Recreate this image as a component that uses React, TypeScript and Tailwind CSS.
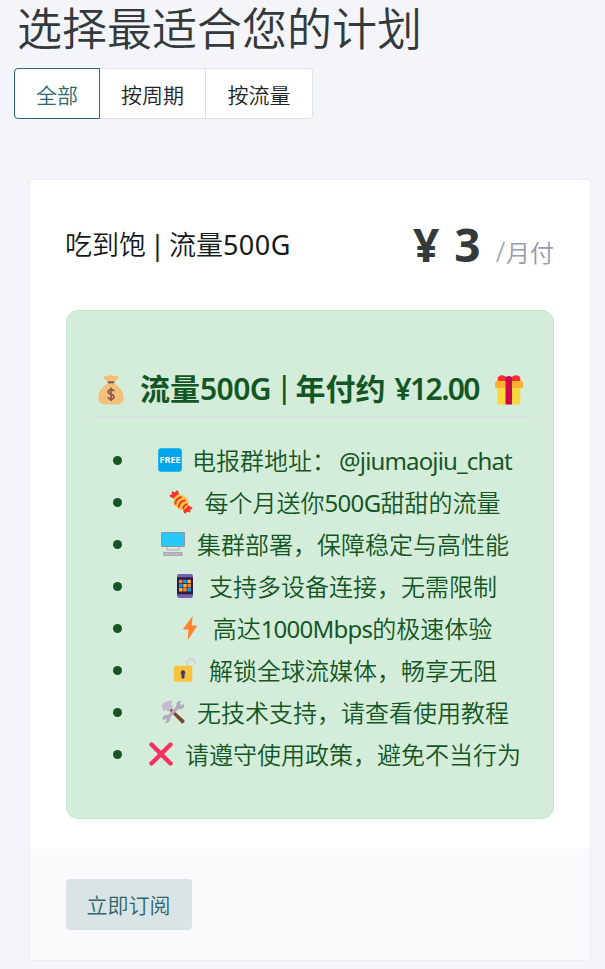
import type { ReactNode } from 'react';

function MoneyBag() {
  return (
    <svg viewBox="0 0 30 34" className="h-[34px] w-[30px]">
      <path d="M8 5.500C7 3 8.500 2 11 3.200C12.500 1.800 17.500 1.800 19 3.200C21.500 2 23 3 22 5.500L18.500 9H11.500Z" fill="#f3c07b" />
      <path d="M11 11H19C25 15 28 20 27.800 25C27.500 29.500 24.500 31.500 20 31.500H10C5.500 31.500 2.500 29.500 2.200 25C2 20 5 15 11 11Z" fill="#f3c07b" />
      <rect x="11.500" y="8.300" width="7" height="2.200" rx="1" fill="#8b5a45" />
      <path d="M15 14.500V28M18 18.200C17.500 16 12.200 16 12.200 19C12.200 22 18 20.500 18 23.700C18 26.800 12.500 26.500 12 24.200" fill="none" stroke="#8b5a45" strokeWidth="1.700" />
    </svg>
  );
}

function Gift() {
  return (
    <svg viewBox="0 0 30 34" className="h-[34px] w-[30px]">
      <path d="M3.500 6.500C3.500 1 10.500 1 13 5L15 8H4Z" fill="#f8312f" />
      <path d="M26.500 6.500C26.500 1 19.500 1 17 5L15 8H26Z" fill="#f8312f" />
      <path d="M3.300 14H26.300V29.500Q26.300 31.500 24.300 31.500H5.300Q3.300 31.500 3.300 29.500Z" fill="#fcd53f" />
      <rect x="1" y="8" width="28" height="7" rx="1.500" fill="#ffb02e" />
      <path d="M11.500 6Q11.500 3 15 3Q18 3 18 6V31.500H11.500Z" fill="#ca0b4a" />
    </svg>
  );
}

function Free() {
  return (
    <svg viewBox="0 0 24 24" className="h-6 w-6">
      <rect x="0.200" y="0.200" width="23.600" height="23.600" rx="3" fill="#00a6ed" />
      <text x="12" y="15.200" textAnchor="middle" textLength="21" lengthAdjust="spacingAndGlyphs" fontFamily="Open Sans, sans-serif" fontSize="9" fontWeight="700" fill="#fff">FREE</text>
    </svg>
  );
}

function Candy() {
  return (
    <svg viewBox="0 0 24 24" className="h-6 w-6">
      <path d="M6 9L2.500 7.500Q0 6.500.800 5L3 4.500L2.500 2.500Q3 1 5 2L6 2.500L7 .700Q9 0 9.500 2L10 6Z" fill="#f8312f" />
      <path d="M18 15L21.500 16.500Q24 17.500 23.200 19L21 19.500L21.500 21.500Q21 23 19 22L18 21.500L17 23.300Q15 24 14.500 22L14 18Z" fill="#f8312f" />
      <rect x="4" y="5.500" width="16" height="13.500" rx="6.500" transform="rotate(42 12 12)" fill="#fcc640" />
      <path d="M6.300 14.500C6.300 10.500 9 7.800 12.500 7M9.800 17.500C9.800 13.800 12.500 11 16.200 10.300M14 18.800C14.500 16.300 16 14.700 18.500 14.300" fill="none" stroke="#f8312f" strokeWidth="1.900" />
    </svg>
  );
}

function Desktop() {
  return (
    <svg viewBox="0 0 24 24" className="h-6 w-6">
      <rect x="0" y="0" width="24" height="15" rx="1" fill="#998ea4" />
      <rect x="1" y="1" width="22" height="13" fill="#26c9fc" />
      <path d="M6 15V17Q6 18 7 18H17Q18 18 18 17V15" fill="none" stroke="#bebebe" strokeWidth="1.500" />
      <rect x="2.500" y="20" width="19" height="4" rx=".600" fill="#aaa2b1" />
      <path d="M4 21.300H20M4 22.700H20" stroke="#d3d3d3" strokeWidth=".800" strokeDasharray="1.500 .700" />
    </svg>
  );
}

function Phone() {
  return (
    <svg viewBox="0 0 24 24" className="h-6 w-6">
      <rect x="4" y="0" width="16" height="24" rx="2.200" fill="#7163b3" />
      <rect x="4" y="3.300" width="16" height="17" fill="#321b41" />
      <path d="M6 5.700h3.500v3.500H6ZM14.400 9.900h3.500v3.500h-3.500ZM10.200 14.100h3.500v3.500h-3.500Z" fill="#ff822d" />
      <path d="M10.200 5.700h3.500v3.500h-3.500ZM6 9.900h3.500v3.500H6ZM14.400 14.100h3.500v3.500h-3.500Z" fill="#00a6ed" />
      <path d="M14.400 5.700h3.500v3.500h-3.500ZM10.200 9.900h3.500v3.500h-3.500ZM6 14.100h3.500v3.500H6Z" fill="#ffb02e" />
    </svg>
  );
}

function Bolt() {
  return (
    <svg viewBox="0 0 24 24" className="h-6 w-6">
      <path d="M14 .800Q14.800 0 14.600 1.500L13.700 9.500H18.500Q19.200 9.800 18.700 10.500L10.600 23Q9.600 23.800 9.800 22.500L10.500 13.500H5.500Q4.900 13.200 5.300 12.500Z" fill="#ff822d" />
    </svg>
  );
}

function Lock() {
  return (
    <svg viewBox="0 0 24 24" className="h-6 w-6">
      <path d="M14 9V5.500C14 -.300 22.300 -.300 22.300 5.500V6" fill="none" stroke="#d3d3d3" strokeWidth="2" />
      <rect x=".700" y="7.700" width="18.600" height="16" rx="2" fill="#f9c23c" />
      <path d="M8.500 16.400A2.300 2.300 0 1 1 11.500 16.400V20Q10 21 8.500 20Z" fill="#433b6b" />
    </svg>
  );
}

function Tools() {
  return (
    <svg viewBox="0 0 24 24" className="h-6 w-6">
      <path d="M8.500 10.500L10.500 8.500L23.300 20.300Q24 21 23.200 22L22 23.200Q21.200 24 20.400 23.100Z" fill="#7d4533" />
      <path d="M.200 5.500Q4 1 9.500 .500L12 1L10 4L12.200 7L7.200 12L4.500 9.500L3 11.500Z" fill="#c4bbce" />
      <path d="M15.200 6.200C14.700 2.500 17.500.500 20.500 1.200L18.700 3.500L20.500 5.500L23 3.700C24 7.500 21.500 10 17.500 9L9.300 17.300C10 20.800 7.300 23.500 3.800 23L5.700 20.500L4.200 18.800L1.700 20.500C.700 16.500 3.500 14.300 7 15Z" fill="#b4acbc" />
    </svg>
  );
}

function Cross() {
  return (
    <svg viewBox="0 0 24 24" className="h-6 w-6">
      <path d="M2.500 2.500L21.500 21.500M21.500 2.500L2.500 21.500" stroke="#f92f60" strokeWidth="4.400" strokeLinecap="round" />
    </svg>
  );
}

const latin = "font-['Noto_Sans','Noto_Sans_CJK_SC',sans-serif]";

const features: { icon: ReactNode; gap: string; text: ReactNode }[] = [
  { icon: <Free />, gap: 'gap-2.5', text: <>电报群地址：<span className={`${latin} ml-[3px] font-normal tracking-[-0.85px]`}>@jiumaojiu_chat</span></> },
  { icon: <Candy />, gap: 'gap-[11px]', text: <>每个月送你<span className={`${latin} font-normal tracking-[-0.65px]`}>500G</span>甜甜的流量</> },
  { icon: <Desktop />, gap: 'gap-3', text: '集群部署，保障稳定与高性能' },
  { icon: <Phone />, gap: 'gap-3', text: '支持多设备连接，无需限制' },
  { icon: <Bolt />, gap: 'gap-[11px]', text: <>高达<span className={`${latin} font-normal tracking-[-0.75px]`}>1000Mbps</span>的极速体验</> },
  { icon: <Lock />, gap: 'gap-3', text: '解锁全球流媒体，畅享无阻' },
  { icon: <Tools />, gap: 'gap-3', text: '无技术支持，请查看使用教程' },
  { icon: <Cross />, gap: 'gap-3', text: '请遵守使用政策，避免不当行为' },
];

export default function App() {
  return (
    <div className="h-[969px] w-[605px] overflow-hidden bg-[#f4f5fb] font-['Noto_Sans_CJK_SC',sans-serif] font-[350] text-[#343a3c]">
      <h1 className="h-[68px] whitespace-nowrap pl-[17px] text-[45px] leading-[54px]">选择最适合您的计划</h1>
      <div className="ml-3.5 flex h-[51px] text-[21px] text-[#212529]">
        <button className="w-[86px] rounded-l border border-[#2c686e] bg-white leading-[51px] text-[#2c686e]">全部</button>
        <button className="w-[106px] border-y border-r border-[#dfe0e6] bg-white leading-[51px]">按周期</button>
        <button className="w-[107px] rounded-r border-y border-r border-[#dfe0e6] bg-white leading-[51px]">按流量</button>
      </div>

      <section className="ml-[29px] mt-[60px] h-[782px] w-[562px] overflow-hidden rounded border border-[#ecedf3] bg-white">
        <header className="flex h-[130px] justify-between pl-[35px] pr-9">
          <h2 className="whitespace-nowrap pt-11 text-[27px] leading-10 text-[#16191c]">
            吃到饱<span className={`${latin} mx-1 font-normal`}>|</span>流量<span className={`${latin} font-normal tracking-[0.5px]`}>500G</span>
          </h2>
          <div className="flex items-baseline whitespace-nowrap pt-[29px] leading-[70px]">
            <span className={`${latin} text-[46px] font-bold`}>¥</span>
            <span className={`${latin} ml-[15px] text-[46px] font-bold`}>3</span>
            <span className="ml-[15px] text-[24px] text-[#959cac]"><span className={`${latin} mr-px text-[27px]`}>/</span>月付</span>
          </div>
        </header>

        <div className="ml-9 h-[509px] w-[488px] rounded-xl border border-[#c3e6cb] bg-[#d4edda] px-[22px] text-[#155724]">
          <h3 className="flex h-[106px] items-end justify-center border-b border-[#dadde6] pb-[9px] text-[30px] leading-[34px]">
            <MoneyBag />
            <span className="ml-[14px] mr-[15px] flex items-center whitespace-nowrap pb-[3px] font-bold">
              流量
              <span className={`${latin} relative top-[2px] font-semibold tracking-[-0.6px]`}>500G</span>
              <span className={`${latin} mx-[5px] font-medium`}>|</span>
              <span className="-ml-0.5">年付约</span>
              <span className={`${latin} relative top-[2px] ml-[9px] font-semibold tracking-[-1.6px]`}>¥12.00</span>
            </span>
            <Gift />
          </h3>
          <ul className="pt-[22px] text-[24px] leading-[42px]">
            {features.map((feature, index) => (
              <li key={index} className="flex h-[42px] items-center">
                <span className="ml-6 h-[9px] w-[9px] shrink-0 rounded-full bg-[#155724]" />
                <span className={`ml-[17px] flex flex-1 items-center justify-center whitespace-nowrap ${feature.gap}`}>
                  {feature.icon}
                  <span>{feature.text}</span>
                </span>
              </li>
            ))}
          </ul>
        </div>

        <footer className="mt-[30px] h-[111px] bg-[#fafafc] pl-9 pt-[30px]">
          <button className="h-[51px] w-[126px] rounded bg-[#dae3e5] pr-px text-[21px] leading-[51px] text-[#2c686e]">立即订阅</button>
        </footer>
      </section>
    </div>
  );
}
